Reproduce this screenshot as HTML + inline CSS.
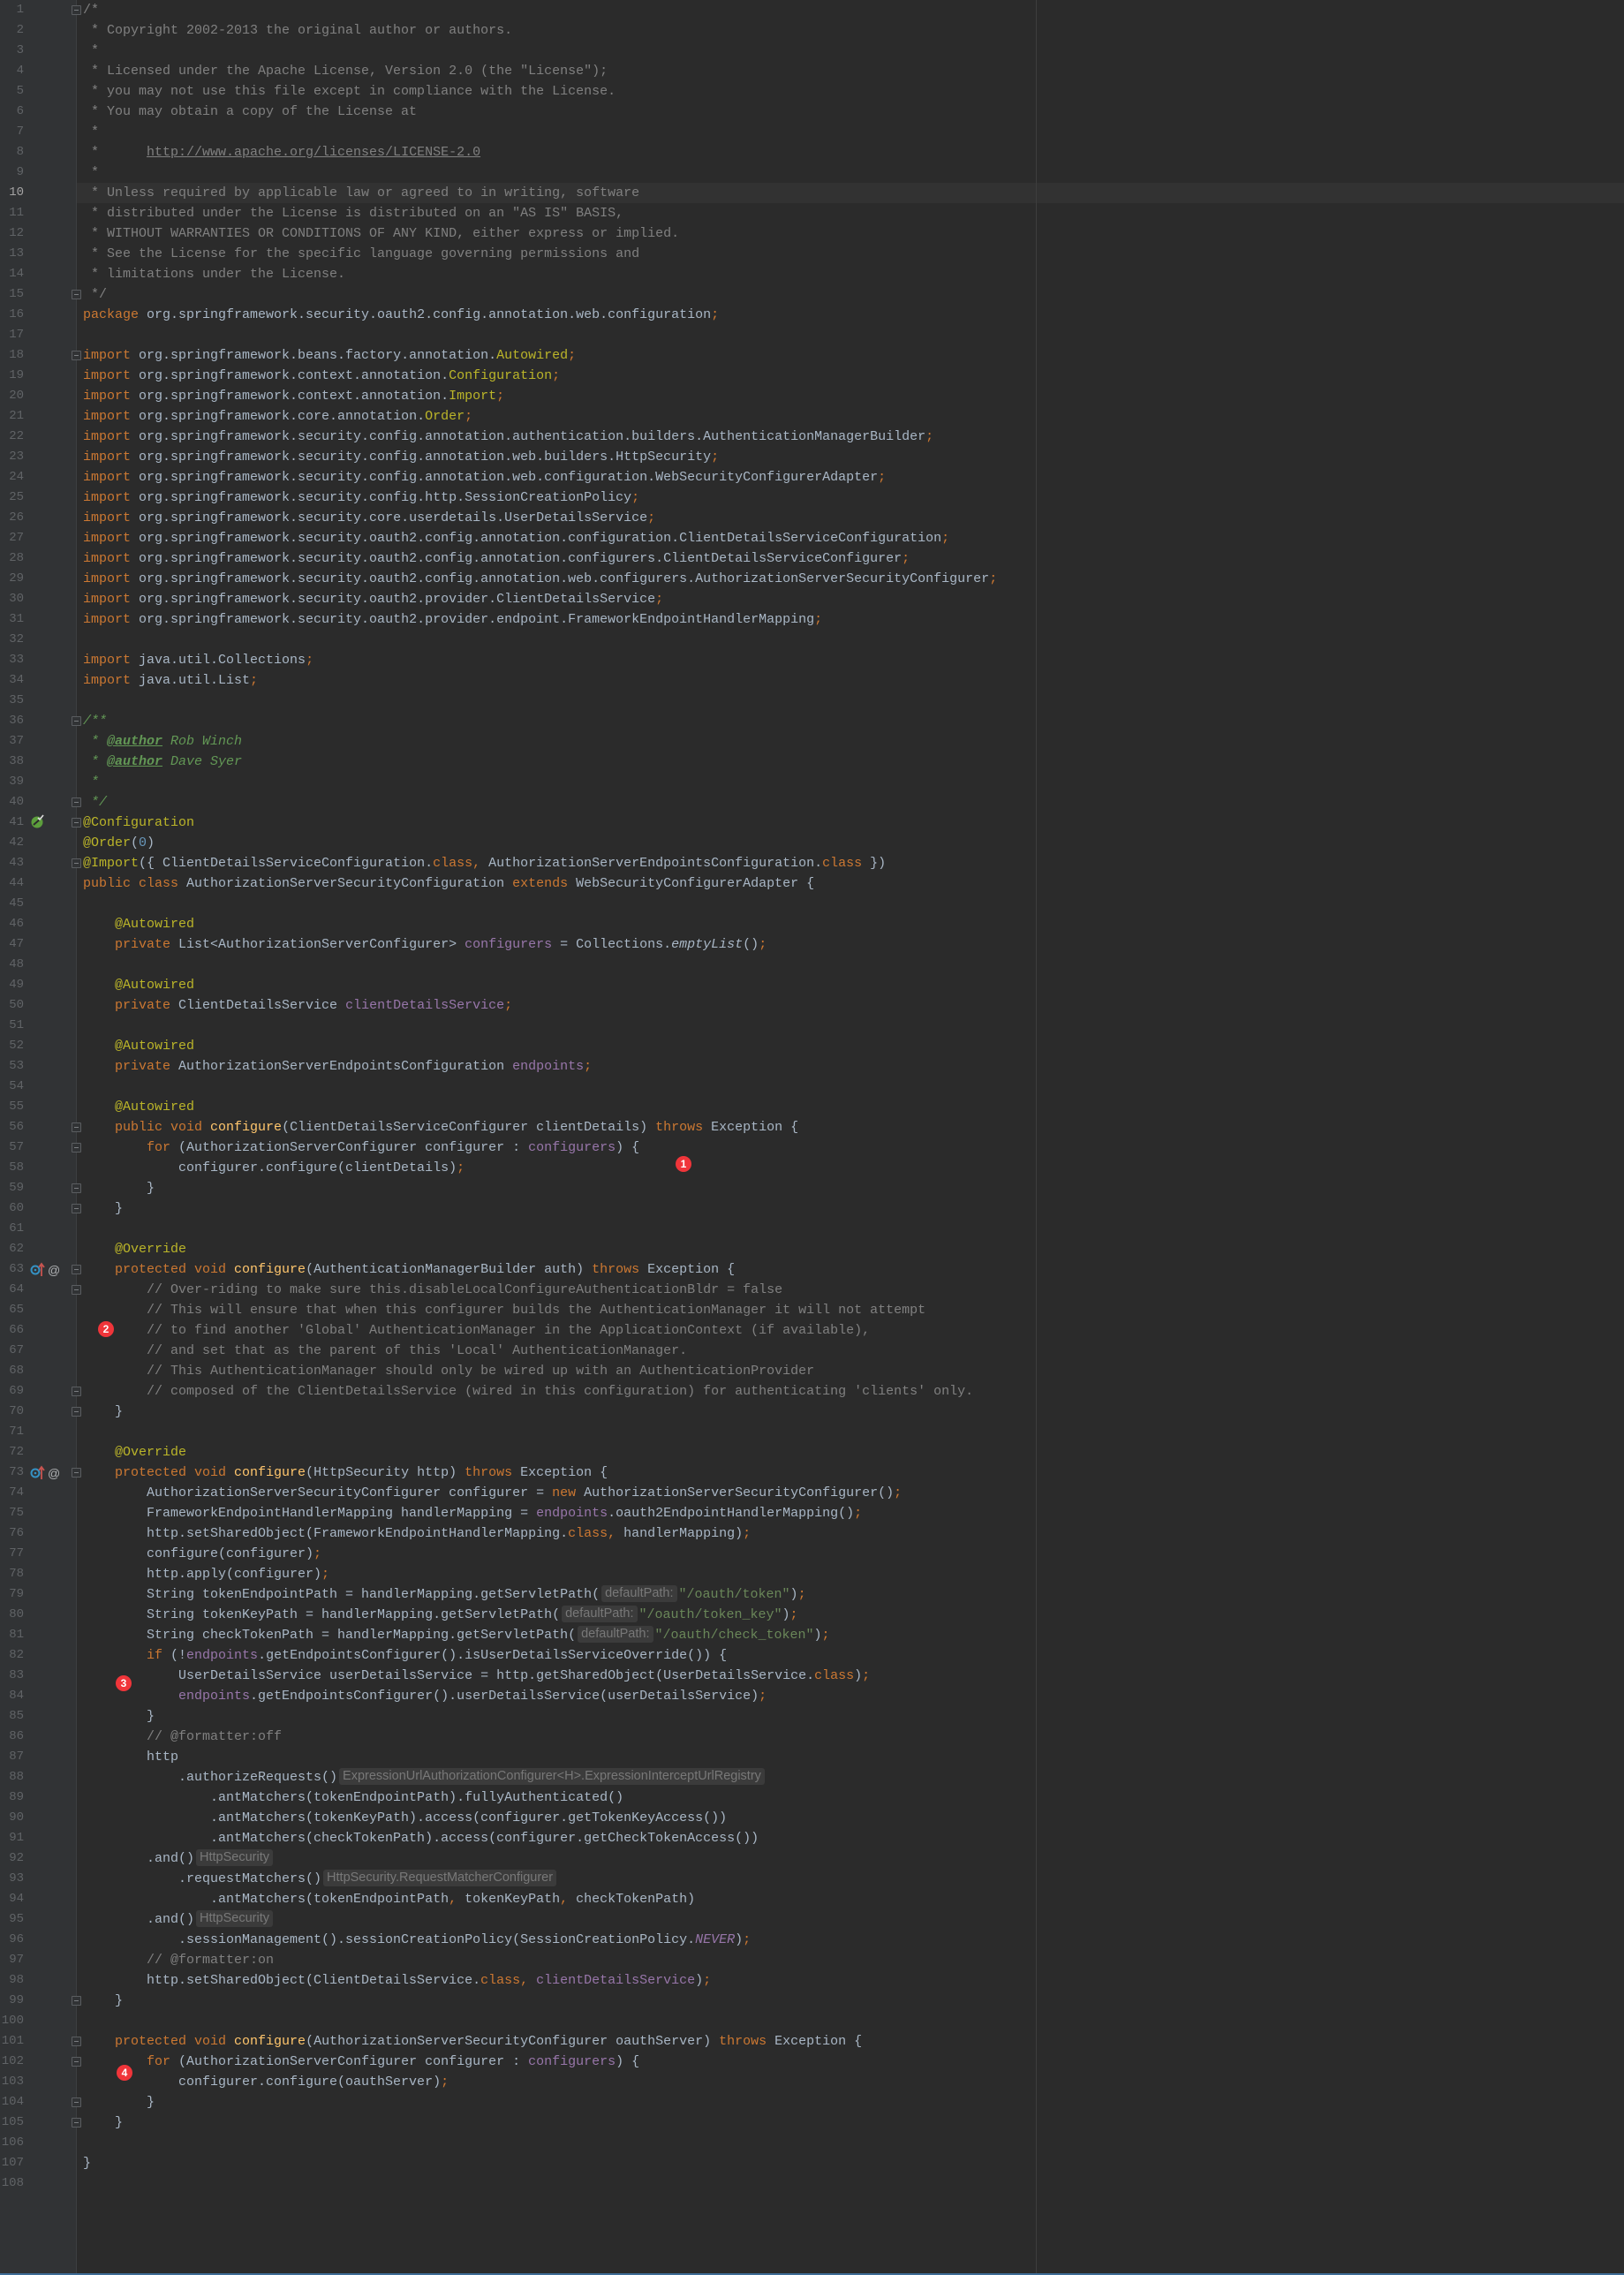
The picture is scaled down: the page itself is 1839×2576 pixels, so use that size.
<!DOCTYPE html>
<html><head><meta charset="utf-8"><style>
html,body{margin:0;padding:0}
body{width:1839px;height:2576px;background:#2b2b2b;position:relative;overflow:hidden;font-family:"Liberation Mono",monospace;font-size:15px;color:#a9b7c6}
#gut{position:absolute;left:0;top:0;width:86px;height:2576px;background:#313335;border-right:1px solid #3c3f41}
#rm{position:absolute;left:1173px;top:0;width:1px;height:2576px;background:#3d3d3d}
#bot{position:absolute;left:0;top:2574px;width:1839px;height:2px;background:#3e6c96}
#cur{position:absolute;left:87px;top:207px;width:1752px;height:23px;background:#323232}
.ln{position:absolute;left:0;width:27px;text-align:right;height:23px;line-height:23px;color:#606366;font-size:14px}
#code{position:absolute;left:94px;top:0}
.l{height:23px;line-height:23px;white-space:pre}
.k{color:#cc7832}.a{color:#bbb529}.s{color:#6a8759}.c{color:#808080}.f{color:#9876aa}.m{color:#ffc66d}.n{color:#6897bb}
.jd{color:#629755;font-style:italic}.jt{color:#629755;font-style:italic;font-weight:bold;text-decoration:underline}
.it{font-style:italic}.u{text-decoration:underline}
.h{display:inline-block;background:#3b3b3b;color:#787878;font-family:"Liberation Sans",sans-serif;font-size:14.5px;line-height:19px;padding:0 4px;border-radius:3px;margin:0 2px;vertical-align:1px}
.fold{position:absolute;left:81px;width:9px;height:9px;border:1px solid #5a5d60;background:#313335;border-radius:1px}
.fold:after{content:"";position:absolute;left:2px;top:4px;width:5px;height:1px;background:#7a7d80}
.b{position:absolute;width:18px;height:18px;border-radius:50%;background:#f0353a;color:#fff;font-family:"Liberation Sans",sans-serif;font-size:12px;font-weight:bold;text-align:center;line-height:18px}
</style></head><body>
<div id="gut"></div><div id="cur"></div><div id="rm"></div><div id="bot"></div>
<div id="lns"></div>
<script>
(function(){var h="";for(var i=1;i<=108;i++){h+='<div class="ln" style="top:'+((i-1)*23)+'px;'+(i==10?'color:#a4a3a3':'')+'">'+i+'</div>';}
var f=[1,15,18,36,40,41,43,56,57,59,60,63,64,69,70,73,99,101,102,104,105];
f.forEach(function(i){h+='<div class="fold" style="top:'+((i-1)*23+6)+'px"></div>';});
document.getElementById("lns").innerHTML=h;})();
</script>
<svg style="position:absolute;left:34px;top:922px" width="17" height="16" viewBox="0 0 17 16"><circle cx="8" cy="9" r="6.5" fill="#5c9e3c"/><path d="M4 12 L12 5" stroke="#2b2b2b" stroke-width="2"/><path d="M9 4 L11 6 L15 1" stroke="#ddd" stroke-width="1.6" fill="none"/></svg>
<svg style="position:absolute;left:34px;top:1429px" width="36" height="18" viewBox="0 0 36 18"><circle cx="6" cy="9" r="4.5" fill="none" stroke="#3592c4" stroke-width="2"/><circle cx="6" cy="9" r="1.3" fill="#3592c4"/><path d="M13 16 V3 M10 6 L13 2 L16 6" stroke="#c75450" stroke-width="1.8" fill="none"/><text x="20" y="14" fill="#afb1b3" font-family="Liberation Sans" font-size="14">@</text></svg>
<svg style="position:absolute;left:34px;top:1659px" width="36" height="18" viewBox="0 0 36 18"><circle cx="6" cy="9" r="4.5" fill="none" stroke="#3592c4" stroke-width="2"/><circle cx="6" cy="9" r="1.3" fill="#3592c4"/><path d="M13 16 V3 M10 6 L13 2 L16 6" stroke="#c75450" stroke-width="1.8" fill="none"/><text x="20" y="14" fill="#afb1b3" font-family="Liberation Sans" font-size="14">@</text></svg>
<div class="b" style="left:765px;top:1309px">1</div>
<div class="b" style="left:111px;top:1496px">2</div>
<div class="b" style="left:131px;top:1897px">3</div>
<div class="b" style="left:132px;top:2338px">4</div>
<div id="code">
<div class="l c">/*</div>
<div class="l c"> * Copyright 2002-2013 the original author or authors.</div>
<div class="l c"> *</div>
<div class="l c"> * Licensed under the Apache License, Version 2.0 (the "License");</div>
<div class="l c"> * you may not use this file except in compliance with the License.</div>
<div class="l c"> * You may obtain a copy of the License at</div>
<div class="l c"> *</div>
<div class="l c"> *      <span class="u">http://www.apache.org/licenses/LICENSE-2.0</span></div>
<div class="l c"> *</div>
<div class="l c"> * Unless required by applicable law or agreed to in writing, software</div>
<div class="l c"> * distributed under the License is distributed on an "AS IS" BASIS,</div>
<div class="l c"> * WITHOUT WARRANTIES OR CONDITIONS OF ANY KIND, either express or implied.</div>
<div class="l c"> * See the License for the specific language governing permissions and</div>
<div class="l c"> * limitations under the License.</div>
<div class="l c"> */</div>
<div class="l"><span class="k">package</span> org.springframework.security.oauth2.config.annotation.web.configuration<span class="k">;</span></div>
<div class="l"> </div>
<div class="l"><span class="k">import</span> org.springframework.beans.factory.annotation.<span class="a">Autowired</span><span class="k">;</span></div>
<div class="l"><span class="k">import</span> org.springframework.context.annotation.<span class="a">Configuration</span><span class="k">;</span></div>
<div class="l"><span class="k">import</span> org.springframework.context.annotation.<span class="a">Import</span><span class="k">;</span></div>
<div class="l"><span class="k">import</span> org.springframework.core.annotation.<span class="a">Order</span><span class="k">;</span></div>
<div class="l"><span class="k">import</span> org.springframework.security.config.annotation.authentication.builders.AuthenticationManagerBuilder<span class="k">;</span></div>
<div class="l"><span class="k">import</span> org.springframework.security.config.annotation.web.builders.HttpSecurity<span class="k">;</span></div>
<div class="l"><span class="k">import</span> org.springframework.security.config.annotation.web.configuration.WebSecurityConfigurerAdapter<span class="k">;</span></div>
<div class="l"><span class="k">import</span> org.springframework.security.config.http.SessionCreationPolicy<span class="k">;</span></div>
<div class="l"><span class="k">import</span> org.springframework.security.core.userdetails.UserDetailsService<span class="k">;</span></div>
<div class="l"><span class="k">import</span> org.springframework.security.oauth2.config.annotation.configuration.ClientDetailsServiceConfiguration<span class="k">;</span></div>
<div class="l"><span class="k">import</span> org.springframework.security.oauth2.config.annotation.configurers.ClientDetailsServiceConfigurer<span class="k">;</span></div>
<div class="l"><span class="k">import</span> org.springframework.security.oauth2.config.annotation.web.configurers.AuthorizationServerSecurityConfigurer<span class="k">;</span></div>
<div class="l"><span class="k">import</span> org.springframework.security.oauth2.provider.ClientDetailsService<span class="k">;</span></div>
<div class="l"><span class="k">import</span> org.springframework.security.oauth2.provider.endpoint.FrameworkEndpointHandlerMapping<span class="k">;</span></div>
<div class="l"> </div>
<div class="l"><span class="k">import</span> java.util.Collections<span class="k">;</span></div>
<div class="l"><span class="k">import</span> java.util.List<span class="k">;</span></div>
<div class="l"> </div>
<div class="l jd">/**</div>
<div class="l jd"> * <span class="jt">@author</span> Rob Winch</div>
<div class="l jd"> * <span class="jt">@author</span> Dave Syer</div>
<div class="l jd"> *</div>
<div class="l jd"> */</div>
<div class="l"><span class="a">@Configuration</span></div>
<div class="l"><span class="a">@Order</span>(<span class="n">0</span>)</div>
<div class="l"><span class="a">@Import</span>({ ClientDetailsServiceConfiguration.<span class="k">class, </span>AuthorizationServerEndpointsConfiguration.<span class="k">class </span>})</div>
<div class="l"><span class="k">public class </span>AuthorizationServerSecurityConfiguration <span class="k">extends </span>WebSecurityConfigurerAdapter {</div>
<div class="l"> </div>
<div class="l">    <span class="a">@Autowired</span></div>
<div class="l">    <span class="k">private </span>List&lt;AuthorizationServerConfigurer&gt; <span class="f">configurers </span>= Collections.<span class="it">emptyList</span>()<span class="k">;</span></div>
<div class="l"> </div>
<div class="l">    <span class="a">@Autowired</span></div>
<div class="l">    <span class="k">private </span>ClientDetailsService <span class="f">clientDetailsService</span><span class="k">;</span></div>
<div class="l"> </div>
<div class="l">    <span class="a">@Autowired</span></div>
<div class="l">    <span class="k">private </span>AuthorizationServerEndpointsConfiguration <span class="f">endpoints</span><span class="k">;</span></div>
<div class="l"> </div>
<div class="l">    <span class="a">@Autowired</span></div>
<div class="l">    <span class="k">public void </span><span class="m">configure</span>(ClientDetailsServiceConfigurer clientDetails) <span class="k">throws </span>Exception {</div>
<div class="l">        <span class="k">for </span>(AuthorizationServerConfigurer configurer : <span class="f">configurers</span>) {</div>
<div class="l">            configurer.configure(clientDetails)<span class="k">;</span></div>
<div class="l">        }</div>
<div class="l">    }</div>
<div class="l"> </div>
<div class="l">    <span class="a">@Override</span></div>
<div class="l">    <span class="k">protected void </span><span class="m">configure</span>(AuthenticationManagerBuilder auth) <span class="k">throws </span>Exception {</div>
<div class="l c">        // Over-riding to make sure this.disableLocalConfigureAuthenticationBldr = false</div>
<div class="l c">        // This will ensure that when this configurer builds the AuthenticationManager it will not attempt</div>
<div class="l c">        // to find another 'Global' AuthenticationManager in the ApplicationContext (if available),</div>
<div class="l c">        // and set that as the parent of this 'Local' AuthenticationManager.</div>
<div class="l c">        // This AuthenticationManager should only be wired up with an AuthenticationProvider</div>
<div class="l c">        // composed of the ClientDetailsService (wired in this configuration) for authenticating 'clients' only.</div>
<div class="l">    }</div>
<div class="l"> </div>
<div class="l">    <span class="a">@Override</span></div>
<div class="l">    <span class="k">protected void </span><span class="m">configure</span>(HttpSecurity http) <span class="k">throws </span>Exception {</div>
<div class="l">        AuthorizationServerSecurityConfigurer configurer = <span class="k">new </span>AuthorizationServerSecurityConfigurer()<span class="k">;</span></div>
<div class="l">        FrameworkEndpointHandlerMapping handlerMapping = <span class="f">endpoints</span>.oauth2EndpointHandlerMapping()<span class="k">;</span></div>
<div class="l">        http.setSharedObject(FrameworkEndpointHandlerMapping.<span class="k">class, </span>handlerMapping)<span class="k">;</span></div>
<div class="l">        configure(configurer)<span class="k">;</span></div>
<div class="l">        http.apply(configurer)<span class="k">;</span></div>
<div class="l">        String tokenEndpointPath = handlerMapping.getServletPath(<span class="h">defaultPath:</span><span class="s">"/oauth/token"</span>)<span class="k">;</span></div>
<div class="l">        String tokenKeyPath = handlerMapping.getServletPath(<span class="h">defaultPath:</span><span class="s">"/oauth/token_key"</span>)<span class="k">;</span></div>
<div class="l">        String checkTokenPath = handlerMapping.getServletPath(<span class="h">defaultPath:</span><span class="s">"/oauth/check_token"</span>)<span class="k">;</span></div>
<div class="l">        <span class="k">if </span>(!<span class="f">endpoints</span>.getEndpointsConfigurer().isUserDetailsServiceOverride()) {</div>
<div class="l">            UserDetailsService userDetailsService = http.getSharedObject(UserDetailsService.<span class="k">class</span>)<span class="k">;</span></div>
<div class="l">            <span class="f">endpoints</span>.getEndpointsConfigurer().userDetailsService(userDetailsService)<span class="k">;</span></div>
<div class="l">        }</div>
<div class="l c">        // @formatter:off</div>
<div class="l">        http</div>
<div class="l">            .authorizeRequests()<span class="h">ExpressionUrlAuthorizationConfigurer&lt;H&gt;.ExpressionInterceptUrlRegistry</span></div>
<div class="l">                .antMatchers(tokenEndpointPath).fullyAuthenticated()</div>
<div class="l">                .antMatchers(tokenKeyPath).access(configurer.getTokenKeyAccess())</div>
<div class="l">                .antMatchers(checkTokenPath).access(configurer.getCheckTokenAccess())</div>
<div class="l">        .and()<span class="h">HttpSecurity</span></div>
<div class="l">            .requestMatchers()<span class="h">HttpSecurity.RequestMatcherConfigurer</span></div>
<div class="l">                .antMatchers(tokenEndpointPath<span class="k">, </span>tokenKeyPath<span class="k">, </span>checkTokenPath)</div>
<div class="l">        .and()<span class="h">HttpSecurity</span></div>
<div class="l">            .sessionManagement().sessionCreationPolicy(SessionCreationPolicy.<span class="f it">NEVER</span>)<span class="k">;</span></div>
<div class="l c">        // @formatter:on</div>
<div class="l">        http.setSharedObject(ClientDetailsService.<span class="k">class, </span><span class="f">clientDetailsService</span>)<span class="k">;</span></div>
<div class="l">    }</div>
<div class="l"> </div>
<div class="l">    <span class="k">protected void </span><span class="m">configure</span>(AuthorizationServerSecurityConfigurer oauthServer) <span class="k">throws </span>Exception {</div>
<div class="l">        <span class="k">for </span>(AuthorizationServerConfigurer configurer : <span class="f">configurers</span>) {</div>
<div class="l">            configurer.configure(oauthServer)<span class="k">;</span></div>
<div class="l">        }</div>
<div class="l">    }</div>
<div class="l"> </div>
<div class="l">}</div>
<div class="l"> </div>
</div>
</body></html>
